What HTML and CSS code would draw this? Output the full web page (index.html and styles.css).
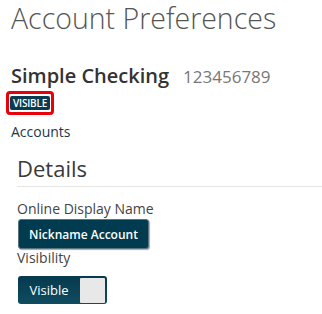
FILE: index.html
```html
<!DOCTYPE html>
<html>
<head>
<meta charset="utf-8">
<link rel="stylesheet" href="styles.css">
</head>
<body>
<div class="page">
  <h1 class="title">Account Preferences</h1>
  <div class="account-head">
    <span class="acct-name">Simple Checking</span>
    <span class="acct-num">123456789</span>
  </div>
  <div class="badge-wrap"><span class="badge">VISIBLE</span></div>
  <div class="crumb">Accounts</div>
  <div class="details">
    <h2 class="section-title">Details</h2>
    <div class="field-label">Online Display Name</div>
    <button class="btn">Nickname Account</button>
    <div class="field-label vis-label">Visibility</div>
    <div class="toggle">
      <span class="toggle-text">Visible</span>
      <span class="knob"></span>
    </div>
  </div>
</div>
</body>
</html>
```
FILE: styles.css
```css
html, body {
  margin: 0;
  padding: 0;
  background: #fff;
}
body {
  font-family: "Open Sans", "Noto Sans", sans-serif;
  width: 322px;
  height: 314px;
  overflow: hidden;
}
.page {
  padding: 0 0 0 11px;
}
.title {
  margin: 0;
  font-weight: 300;
  font-size: 28.5px;
  line-height: 36px;
  color: #555;
}
.account-head {
  margin-top: 28px;
  display: flex;
  align-items: baseline;
  gap: 14px;
  line-height: 24px;
}
.acct-name {
  font-weight: 600;
  font-size: 20px;
  color: #333;
}
.acct-num {
  font-size: 17px;
  color: #777;
}
.badge-wrap {
  margin-left: -5px;
  margin-top: 2px;
  display: inline-block;
  border: 3px solid #e8000b;
  border-radius: 4px;
  padding: 2px 1px;
  line-height: 0;
}
.badge {
  display: inline-block;
  background: #0b3b50;
  color: #fff;
  font-size: 10px;
  font-weight: 600;
  line-height: 14px;
  padding: 0 3px;
  border-radius: 2px;
  letter-spacing: -0.2px;
}
.crumb {
  margin-top: 8px;
  font-size: 14px;
  line-height: 18px;
  color: #17394d;
}
.details {
  margin-left: 6px;
  margin-top: 12px;
}
.section-title {
  margin: 0;
  font-weight: 400;
  font-size: 22px;
  line-height: 30px;
  color: #3a3a3a;
  border-bottom: 1px solid #e5e5e5;
  padding-bottom: 3px;
}
.field-label {
  font-size: 14px;
  line-height: 18px;
  color: #444;
  margin-top: 13px;
}
.btn {
  display: block;
  margin: 1px 0 0 1px;
  height: 30px;
  width: 131px;
  background: #003b4f;
  color: #fff;
  font-family: "Open Sans", "Noto Sans", sans-serif;
  font-weight: 600;
  font-size: 12px;
  border: 1px solid #5a7380;
  border-radius: 3px;
  box-shadow: 1px 1px 1px #aaa;
  padding: 0;
}
.vis-label {
  margin-top: 0;
}
.toggle {
  margin: 9px 0 0 1px;
  width: 89px;
  height: 28px;
  border-radius: 3px;
  background: linear-gradient(#063a4e, #0f4c60);
  display: flex;
  align-items: center;
  box-sizing: border-box;
  padding: 1px 2px 1px 0;
}
.toggle-text {
  color: #fff;
  font-size: 13px;
  width: 62px;
  text-align: center;
}
.knob {
  width: 25px;
  height: 25px;
  background: #e8e8e8;
  border-radius: 1px;
}
```
